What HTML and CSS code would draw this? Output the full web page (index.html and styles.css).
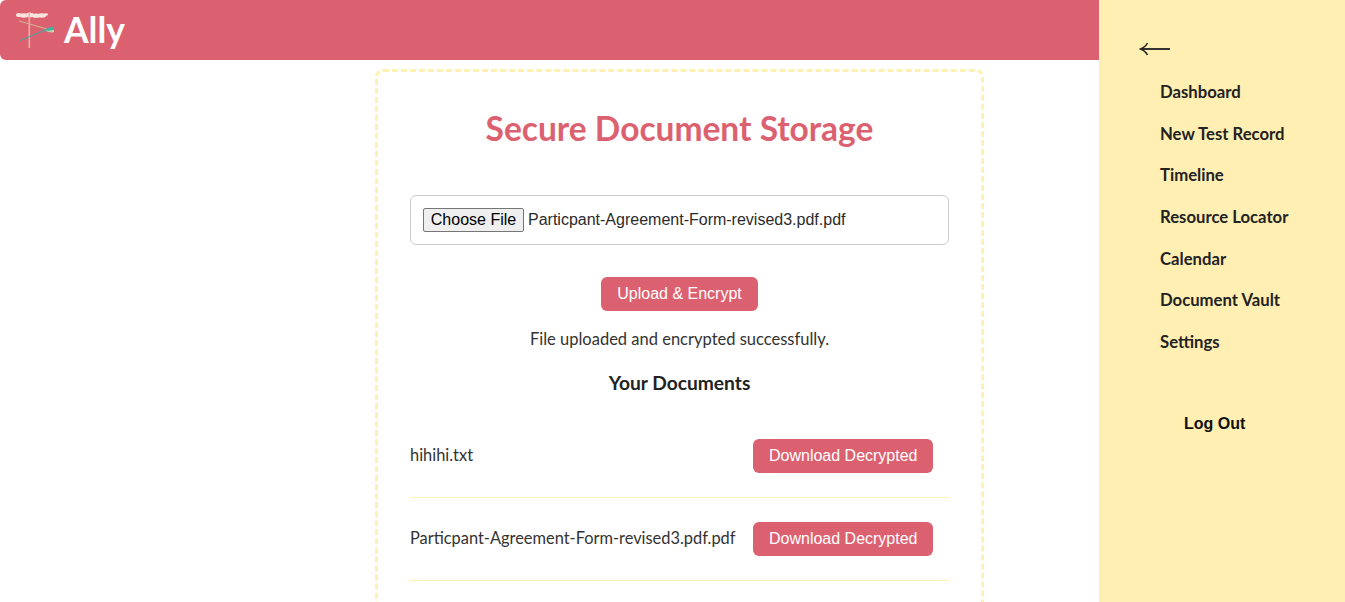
FILE: index.html
```html
<!DOCTYPE html>
<html lang="en">
<head>
<meta charset="utf-8">
<title>Ally</title>
<link rel="stylesheet" href="styles.css">
</head>
<body>
<header class="topbar">
  <svg class="logo" viewBox="0 0 42 40" width="42" height="40" aria-hidden="true">
    <g fill="#fbe4df">
      <ellipse cx="5" cy="5" rx="3" ry="2"/>
      <ellipse cx="10" cy="5.500" rx="4" ry="2.200"/>
      <ellipse cx="16" cy="5" rx="4" ry="2.300"/>
      <ellipse cx="22" cy="5.800" rx="4" ry="2.200"/>
      <ellipse cx="28" cy="5.500" rx="4" ry="2.200"/>
      <ellipse cx="32" cy="4.500" rx="2" ry="1.300"/>
    </g>
    <path d="M14.500 2 h1.600 v36 h-1.600z" fill="#f4b09f"/>
    <path d="M5 11 L40 21" stroke="#cdb88f" stroke-width="1" fill="none"/>
    <path d="M5 31 L38 17" stroke="#3eaaa0" stroke-width="1" fill="none"/>
    <path d="M29 21 Q36 17.500 39 16.500 L40 20 Q35 22 29 21z" fill="#3fb3a3"/>
    <path d="M31 20.500 Q37 23.500 40 22 L40 20 Q36 21 31 20.500z" fill="#c2d7a9"/>
  </svg>
  <span class="brand">Ally</span>
</header>
<main class="page">
  <section class="card">
    <h1 class="title">Secure Document Storage</h1>
    <div class="file-box">
      <span class="file-button">Choose File</span>
      <span class="file-name">Particpant-Agreement-Form-revised3.pdf.pdf</span>
    </div>
    <button class="btn btn-upload" type="button">Upload &amp; Encrypt</button>
    <p class="status">File uploaded and encrypted successfully.</p>
    <h2 class="subtitle">Your Documents</h2>
    <ul class="docs">
      <li class="doc">
        <span class="doc-name">hihihi.txt</span>
        <button class="btn" type="button">Download Decrypted</button>
      </li>
      <li class="doc">
        <span class="doc-name">Particpant-Agreement-Form-revised3.pdf.pdf</span>
        <button class="btn" type="button">Download Decrypted</button>
      </li>
    </ul>
  </section>
</main>
<aside class="sidebar">
  <svg class="back" viewBox="0 0 32 14" width="32" height="14" aria-hidden="true">
    <path d="M2 7 H31" stroke="#333" stroke-width="2" fill="none"/>
    <path d="M8.500 1 Q6.500 5 1.500 7 Q6.500 9 8.500 13" stroke="#222" stroke-width="1.500" fill="none"/>
  </svg>
  <nav class="nav">
    <a class="nav-link">Dashboard</a>
    <a class="nav-link">New Test Record</a>
    <a class="nav-link">Timeline</a>
    <a class="nav-link">Resource Locator</a>
    <a class="nav-link">Calendar</a>
    <a class="nav-link">Document Vault</a>
    <a class="nav-link">Settings</a>
  </nav>
  <div class="logout">Log Out</div>
</aside>
</body>
</html>
```
FILE: styles.css
```css
* { box-sizing: border-box; }
html, body { margin: 0; height: 602px; overflow: hidden; background: #fff; }
body { font-family: Lato, "Noto Sans", sans-serif; color: #2b2b2b; }

.topbar {
  height: 60px;
  background: #dc6170;
  border-radius: 6px;
  display: flex;
  align-items: center;
  padding-left: 14px;
  gap: 8px;
}
.logo { display: block; }
.brand { color: #fff; font-size: 35.500px; font-weight: 700; line-height: 60px; }

.page { height: 542px; overflow: hidden; padding: 9px 0 0 375px; }
.card {
  width: 609px;
  height: 600px;
  border: 3px dashed #fff0b3;
  border-radius: 8px;
  padding: 0 32px;
  text-align: center;
}
.title {
  margin: 31px 0 0;
  font-size: 33.500px;
  line-height: 50px;
  font-weight: 700;
  color: #dc6170;
}
.file-box {
  margin-top: 42px;
  height: 50px;
  border: 1px solid #ccc;
  border-radius: 6px;
  display: flex;
  align-items: center;
  padding-left: 12px;
  font-family: "Liberation Sans", Arial, sans-serif;
  font-size: 16px;
  text-align: left;
}
.file-button {
  width: 101px;
  height: 24px;
  line-height: 21px;
  border: 1px solid #767676;
  border-radius: 2px;
  background: #efefef;
  color: #000;
  text-align: center;
}
.file-name { margin-left: 4px; color: #2b2b2b; }

.btn {
  height: 34px;
  padding: 0 15.500px;
  border: 0;
  border-radius: 6px;
  background: #dc6170;
  color: #fff;
  font-family: "Liberation Sans", Arial, sans-serif;
  font-size: 16px;
  white-space: nowrap;
}
.btn-upload { display: block; margin: 32px auto 0; width: 157px; padding: 0; }

.status { margin: 16px 0 0; font-size: 16.500px; line-height: 24px; color: #333; }
.subtitle { margin: 18px 0 0; font-size: 19.200px; line-height: 28px; font-weight: 700; color: #222; }

.docs { list-style: none; margin: 18px 0 0; padding: 0; }
.doc {
  display: flex;
  align-items: center;
  justify-content: space-between;
  padding: 24px 16px 24px 0;
  border-bottom: 1px solid #fff0b3;
  text-align: left;
}
.doc-name { font-size: 16.400px; color: #333; padding-bottom: 3px; }

.sidebar {
  position: absolute;
  top: 0;
  right: 0;
  bottom: 0;
  width: 246px;
  background: #ffefb3;
  padding: 42px 0 0 40px;
}
.back { display: block; }
.nav { display: flex; flex-direction: column; margin: 16px 0 0 21px; }
.nav-link { height: 41.670px; line-height: 41.670px; font-size: 16.700px; font-weight: 700; color: #222; white-space: nowrap; }
.logout {
  margin: 48px 0 0 45px;
  line-height: 24px;
  font-family: "Liberation Sans", Arial, sans-serif;
  font-size: 16px;
  font-weight: 700;
  color: #111;
}
```
